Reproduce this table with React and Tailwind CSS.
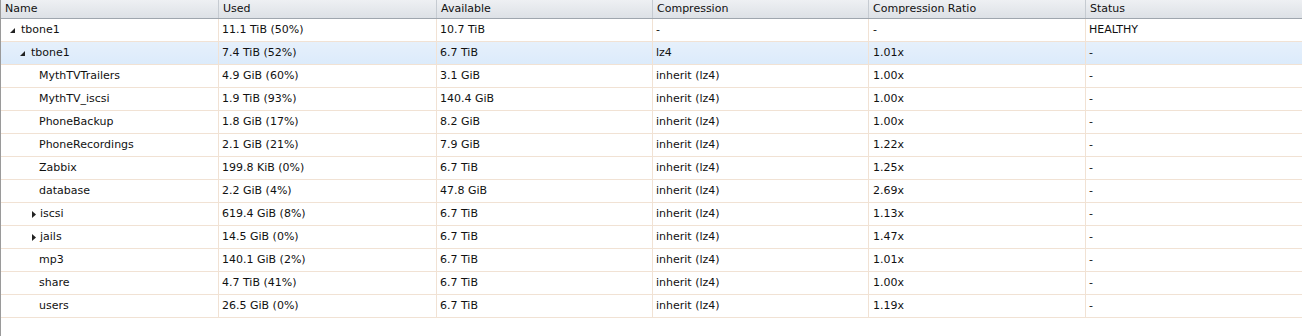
import React from 'react';

const cols = [
  { key: 'name', label: 'Name', w: 'w-[218px]' },
  { key: 'used', label: 'Used', w: 'w-[218px]' },
  { key: 'avail', label: 'Available', w: 'w-[216px]' },
  { key: 'comp', label: 'Compression', w: 'w-[216px]' },
  { key: 'ratio', label: 'Compression Ratio', w: 'w-[217px]' },
  { key: 'status', label: 'Status', w: 'flex-1' },
];

const rows = [
  { name: 'tbone1', level: 0, arrow: 'open', used: '11.1 TiB (50%)', avail: '10.7 TiB', comp: '-', ratio: '-', status: 'HEALTHY' },
  { name: 'tbone1', level: 1, arrow: 'open', used: '7.4 TiB (52%)', avail: '6.7 TiB', comp: 'lz4', ratio: '1.01x', status: '-', selected: true },
  { name: 'MythTVTrailers', level: 2, used: '4.9 GiB (60%)', avail: '3.1 GiB', comp: 'inherit (lz4)', ratio: '1.00x', status: '-' },
  { name: 'MythTV_iscsi', level: 2, used: '1.9 TiB (93%)', avail: '140.4 GiB', comp: 'inherit (lz4)', ratio: '1.00x', status: '-' },
  { name: 'PhoneBackup', level: 2, used: '1.8 GiB (17%)', avail: '8.2 GiB', comp: 'inherit (lz4)', ratio: '1.00x', status: '-' },
  { name: 'PhoneRecordings', level: 2, used: '2.1 GiB (21%)', avail: '7.9 GiB', comp: 'inherit (lz4)', ratio: '1.22x', status: '-' },
  { name: 'Zabbix', level: 2, used: '199.8 KiB (0%)', avail: '6.7 TiB', comp: 'inherit (lz4)', ratio: '1.25x', status: '-' },
  { name: 'database', level: 2, used: '2.2 GiB (4%)', avail: '47.8 GiB', comp: 'inherit (lz4)', ratio: '2.69x', status: '-' },
  { name: 'iscsi', level: 2, arrow: 'closed', used: '619.4 GiB (8%)', avail: '6.7 TiB', comp: 'inherit (lz4)', ratio: '1.13x', status: '-' },
  { name: 'jails', level: 2, arrow: 'closed', used: '14.5 GiB (0%)', avail: '6.7 TiB', comp: 'inherit (lz4)', ratio: '1.47x', status: '-' },
  { name: 'mp3', level: 2, used: '140.1 GiB (2%)', avail: '6.7 TiB', comp: 'inherit (lz4)', ratio: '1.01x', status: '-' },
  { name: 'share', level: 2, used: '4.7 TiB (41%)', avail: '6.7 TiB', comp: 'inherit (lz4)', ratio: '1.00x', status: '-' },
  { name: 'users', level: 2, used: '26.5 GiB (0%)', avail: '6.7 TiB', comp: 'inherit (lz4)', ratio: '1.19x', status: '-' },
];

const indent = ['pl-[8px]', 'pl-[18px]', 'pl-[29px]'];

const Arrow = ({ kind }) => {
  if (kind === 'open') {
    return (
      <svg width="7" height="7" viewBox="0 0 7 7" className="mr-[5px] shrink-0">
        <polygon points="6,1 6,6 1,6" fill="#222" />
      </svg>
    );
  }
  if (kind === 'closed') {
    return (
      <svg width="7" height="9" viewBox="0 0 7 9" className="mr-[3px] shrink-0">
        <polygon points="2,1 6,4.5 2,8" fill="#222" />
      </svg>
    );
  }
  return <span className="w-[10px] shrink-0" />;
};

const App = () => {
  return (
    <div className="w-[1302px] h-[336px] bg-white border-l border-[#9a9a9a] text-[11px] text-[#111]" style={{ fontFamily: '"DejaVu Sans", Verdana, sans-serif' }}>
      {/* Header */}
      <div className="flex h-[19px] bg-gradient-to-b from-[#eef0f3] to-[#dde1e6] border-b border-[#9fa6ae]">
        {cols.map((c, i) => (
          <div
            key={c.key}
            className={`${c.w} flex items-center px-[4px] ${i < cols.length - 1 ? 'border-r border-[#c6cbd1]' : ''}`}
          >
            {c.label}
          </div>
        ))}
      </div>

      {/* Rows */}
      {rows.map((r, idx) => (
        <div
          key={idx}
          className={`flex h-[23px] border-b border-[#f1e2d4] ${
            r.selected ? 'bg-gradient-to-b from-[#e6f0fb] to-[#dcebfb] border-t border-t-[#f1e2d4] -mt-px h-[24px]' : ''
          }`}
        >
          <div className={`w-[218px] flex items-center border-r border-[#f1e2d4] ${indent[r.level]}`}>
            {r.level === 2 && !r.arrow ? <span className="w-[9px] shrink-0" /> : <Arrow kind={r.arrow} />}
            <span>{r.name}</span>
          </div>
          <div className="w-[218px] flex items-center px-[3px] border-r border-[#f1e2d4]">{r.used}</div>
          <div className="w-[216px] flex items-center px-[3px] border-r border-[#f1e2d4]">{r.avail}</div>
          <div className="w-[216px] flex items-center px-[3px] border-r border-[#f1e2d4]">{r.comp}</div>
          <div className="w-[217px] flex items-center px-[4px] border-r border-[#f1e2d4]">{r.ratio}</div>
          <div className="flex-1 flex items-center px-[3px]">{r.status}</div>
        </div>
      ))}
    </div>
  );
};

export default App;
